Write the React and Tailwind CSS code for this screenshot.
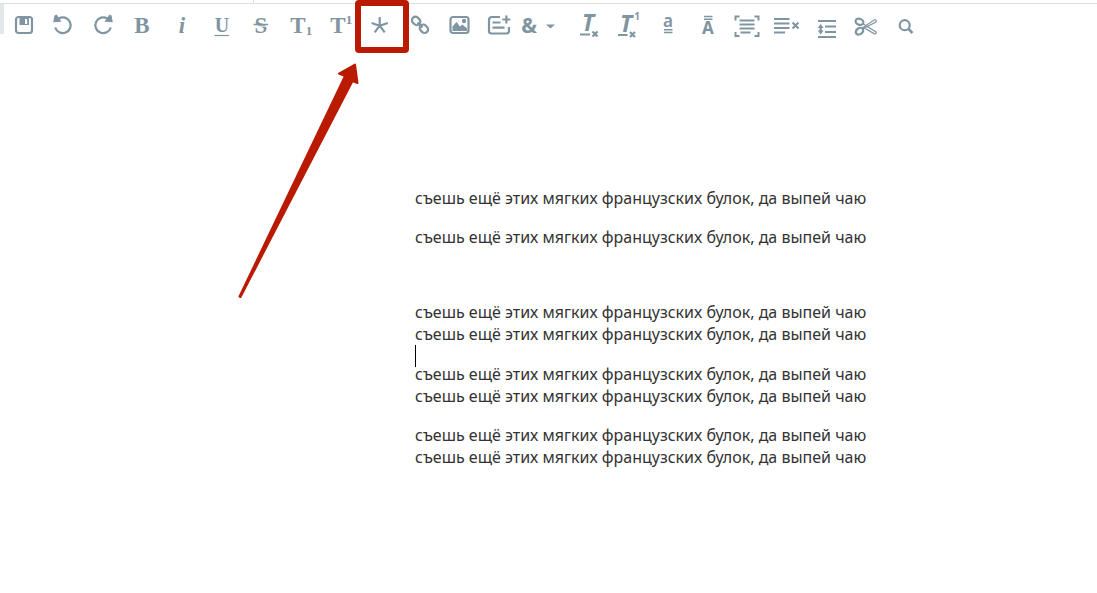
const LINE = "съешь ещё этих мягких французских булок, да выпей чаю";

// Every toolbar drawing shares one 32x32 canvas
function Icon({ children }) {
  return (
    <svg
      className="w-8 h-8 shrink-0 overflow-visible"
      viewBox="0 0 32 32"
      fill="none"
      stroke="currentColor"
      strokeWidth="2.2"
      aria-hidden="true"
    >
      {children}
    </svg>
  );
}

function Glyph({ x = 16, y = 23, size = 23, weight = 700, italic = false, sans = false, children }) {
  return (
    <text
      x={x}
      y={y}
      fontSize={size}
      fontWeight={weight}
      fontStyle={italic ? "italic" : "normal"}
      fontFamily={sans ? "'Noto Sans', sans-serif" : "'Liberation Serif', serif"}
      textAnchor="middle"
      fill="currentColor"
      stroke="none"
    >
      {children}
    </text>
  );
}

const mainTools = [
  {
    label: "Сохранить",
    icon: (
      <>
        <rect x="8" y="7" width="16" height="16" rx="2.5" />
        <path d="M11.5 7h9.5v8h-9.500zM17 9v5h2.200V9z" fill="currentColor" fillRule="evenodd" stroke="none" />
      </>
    ),
  },
  {
    label: "Отменить",
    icon: (
      <>
        <path d="M8.2 17.5A7.9 7.9 0 1 0 11.6 8.5" />
        <path d="M6.2 12.2 7.5 5.5 9.5 4.5 14.5 11.8z" fill="currentColor" stroke="none" />
      </>
    ),
  },
  {
    label: "Повторить",
    icon: (
      <>
        <path d="M23.8 17.5A7.9 7.9 0 1 1 20.4 8.5" />
        <path d="M25.8 12.2 24.5 5.5 22.5 4.5 17.5 11.8z" fill="currentColor" stroke="none" />
      </>
    ),
  },
  { label: "Полужирный", icon: <Glyph x={15}>B</Glyph> },
  { label: "Курсив", icon: <Glyph italic>i</Glyph> },
  {
    label: "Подчёркнутый",
    icon: (
      <>
        <Glyph y={22} size={20}>U</Glyph>
        <path d="M8.5 25.5H23" strokeWidth="1.2" />
      </>
    ),
  },
  {
    label: "Зачёркнутый",
    icon: (
      <>
        <Glyph>S</Glyph>
        <path d="M8 16.2H24" stroke="white" strokeWidth="1" />
        <path d="M8.5 14.5H23" strokeWidth="1.5" />
      </>
    ),
  },
  {
    label: "Нижний индекс",
    icon: (
      <>
        <Glyph x={13}>T</Glyph>
        <Glyph x={24} y={25} size={13}>1</Glyph>
      </>
    ),
  },
  {
    label: "Верхний индекс",
    icon: (
      <>
        <Glyph x={13}>T</Glyph>
        <Glyph x={24} y={14} size={13}>1</Glyph>
      </>
    ),
  },
  {
    label: "Сноска",
    icon: <path d="M15.7 15.7V7M15.7 15.7 7.6 13M15.7 15.7 23.8 13M15.7 15.7 10.7 22.4M15.7 15.7 20.7 22.4" />,
  },
  {
    label: "Ссылка",
    icon: (
      <>
        <rect x="7.6" y="7.4" width="9" height="7" rx="3.5" transform="rotate(45 12.1 10.9)" />
        <rect x="15.4" y="15.2" width="9" height="7" rx="3.5" transform="rotate(45 19.9 18.7)" />
        <path d="m13.5 12.5 5 5" />
      </>
    ),
  },
  {
    label: "Изображение",
    icon: (
      <>
        <rect x="6.5" y="7" width="18" height="16" rx="2.5" />
        <path d="M8.5 21v-4.5l4-4.5 3.5 4.5 2.5-2 4.500 4V21z" fill="currentColor" stroke="none" />
        <circle cx="20" cy="11" r="2.2" fill="currentColor" stroke="none" />
      </>
    ),
  },
  {
    label: "Примечание",
    icon: (
      <path d="M17 7H9q-3 0-3 3v11q0 2.5 2.5 2.5h15q2.5 0 2.5-2.5v-4M23.4 5.5v8M19.4 9.500h8M9.5 12.5h8M9.5 17.7h12" />
    ),
  },
];

const extraTools = [
  {
    label: "Очистить формат",
    icon: (
      <>
        <Glyph x={15} y={21} italic sans>T</Glyph>
        <path d="M7 24.5h10M19.500 21.5l5 5M24.5 21.5l-5 5" />
      </>
    ),
  },
  {
    label: "Очистить индексы",
    icon: (
      <>
        <Glyph x={14} y={22} italic sans>T</Glyph>
        <Glyph x={25} y={10} size={10} sans>1</Glyph>
        <path d="M6 25h9.5M18 22l5 5M23 22l-5 5" />
      </>
    ),
  },
  {
    label: "Строчные буквы",
    icon: (
      <>
        <Glyph y={17} size={17} weight={600} sans>a</Glyph>
        <path d="M12 19.8h8.5M12 22.5h8.5" strokeWidth="1.4" />
      </>
    ),
  },
  {
    label: "Прописные буквы",
    icon: (
      <>
        <Glyph y={24} size={17} sans>A</Glyph>
        <path d="M12 6.5h8.5M12 9.3h8.5" strokeWidth="1.4" />
      </>
    ),
  },
  {
    label: "Выделить абзац",
    icon: (
      <path
        d="M4.5 10.5V6.5h4M23.500 6.5h4v4M27.5 22v4h-4M8.5 26h-4v-4M8.5 10.5h15M8.5 14.5h15M8.5 18.5h15M9.5 22.500h10"
        strokeWidth="2"
      />
    ),
  },
  {
    label: "Убрать выравнивание",
    icon: (
      <path
        d="M3 9h15.5M3 13.5h15.5M3 18h15.5M3 22.500h11M21.5 12.500l6 6M27.5 12.500l-6 6"
        strokeWidth="2"
      />
    ),
  },
  {
    label: "Межстрочный интервал",
    icon: (
      <>
        <path d="M7 11h18M14 16.5h11M14 22h11M7 27h18M9.7 16v6" />
        <path d="m9.7 14 3 4H6.700zM9.7 24.500l3-4H6.700z" fill="currentColor" stroke="none" />
      </>
    ),
  },
  {
    label: "Вырезать",
    icon: (
      <>
        <ellipse cx="9.5" cy="11.8" rx="4" ry="3" transform="rotate(20 9.5 11.8)" />
        <ellipse cx="9.5" cy="21.2" rx="4" ry="3" transform="rotate(-35 9.5 21.2)" />
        <path d="M12.5 13.500 26 22q1 2-1.500 1.800L12.500 17M12.500 19 26 12q1-2.500-1.500-2.200L13 17.500" strokeWidth="1.2" />
      </>
    ),
  },
  {
    label: "Найти",
    icon: (
      <>
        <circle cx="14.7" cy="15.2" r="5" />
        <path d="m18.500 19 4 4" strokeWidth="2.5" />
      </>
    ),
  },
];

function ToolButton({ label, icon }) {
  return (
    <button type="button" aria-label={label} className="flex h-11 items-center justify-center">
      <Icon>{icon}</Icon>
    </button>
  );
}

function Annotation() {
  return (
    <div className="pointer-events-none absolute top-0 left-0">
      <div className="absolute top-0 left-[355px] h-[53px] w-[54px] rounded border-6 border-[#ba1a00]" />
      <svg
        className="absolute top-[50px] left-[230px]"
        width="150"
        height="260"
        viewBox="0 0 150 260"
        fill="#ba1a00"
        stroke="#ba1a00"
        strokeWidth="2"
        strokeLinejoin="round"
      >
        <path d="M125 14.500 109 23.500 115 26 9.500 246.500 10.500 247 122.500 31 127.500 33z" />
      </svg>
    </div>
  );
}

export default function App() {
  return (
    <div className="relative min-h-screen bg-white">
      <div className="h-1 border-b border-[#dcdfe2]">
        <div className="h-full w-[254px] border-r border-[#dcdfe2]" />
      </div>

      <div role="toolbar" className="flex items-start text-[#7f95a1]">
        <div className="h-[30px] w-1 bg-[#e4e8eb]" />
        <div className="grid w-[515px] grid-cols-13">
          {mainTools.map((tool) => (
            <ToolButton key={tool.label} {...tool} />
          ))}
        </div>
        <button type="button" aria-label="Специальные символы" className="flex h-11 w-[50px] items-center">
          <Icon>
            <Glyph x={10} size={21} sans>&amp;</Glyph>
            <path d="M27 14.500h9l-4.500 4z" fill="currentColor" stroke="none" />
          </Icon>
        </button>
        <div className="grid w-[357px] grid-cols-9">
          {extraTools.map((tool) => (
            <ToolButton key={tool.label} {...tool} />
          ))}
        </div>
      </div>

      <main
        contentEditable
        suppressContentEditableWarning
        spellCheck={false}
        className="pt-[139px] pl-[415px] font-['Noto_Sans',sans-serif] text-[16px] leading-[22px] text-[#333] outline-none"
      >
        <p className="mb-[17px]">{LINE}</p>
        <p className="mb-[17px]">{LINE}</p>
        <p className="mb-[17px] h-[19px]" />
        <p>
          {LINE}
          <br />
          {LINE}
        </p>
        <div className="relative h-[18px]">
          <span className="absolute top-0 left-0 h-[22px] w-px bg-black" />
        </div>
        <p className="mb-[17px]">
          {LINE}
          <br />
          {LINE}
        </p>
        <p>
          {LINE}
          <br />
          {LINE}
        </p>
      </main>

      <Annotation />
    </div>
  );
}
